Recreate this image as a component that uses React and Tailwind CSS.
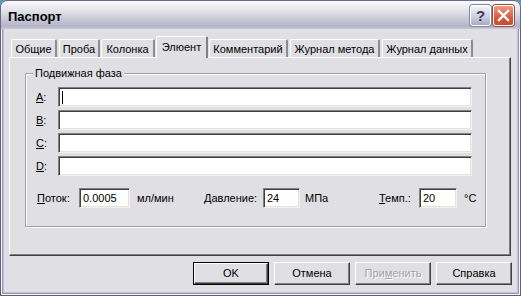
import React from 'react';

const tabs = [
  { label: 'Общие', w: 46, ml: 0 },
  { label: 'Проба', w: 41, ml: 2 },
  { label: 'Колонка', w: 54, ml: 1 },
  { label: 'Элюент', w: 52, ml: 1, active: true },
  { label: 'Комментарий', w: 79, ml: 1 },
  { label: 'Журнал метода', w: 90, ml: 2 },
  { label: 'Журнал данных', w: 91, ml: 2 },
];

const Field = ({ className = '', children }) => (
  <div
    className={`h-[20px] bg-white border border-t-[#808080] border-l-[#808080] border-b-[#f2f2ea] border-r-[#f2f2ea] shadow-[inset_1px_1px_0_#404040,inset_-1px_-1px_0_#e4e4dc] flex items-center pl-[3px] text-black ${className}`}
  >
    {children}
  </div>
);

const Button = ({ children, def, disabled }) => (
  <div
    className={`w-[76px] h-[23px] flex items-center justify-center ${
      def ? 'border border-black' : ''
    }`}
  >
    <div className="w-full h-full flex items-center justify-center bg-[#e0dfe3] border border-t-white border-l-white border-b-[#404040] border-r-[#404040] shadow-[inset_-1px_-1px_0_#808080]">
      <span
        className={
          disabled
            ? 'text-[#a0a0a0] [text-shadow:1px_1px_0_#ffffff]'
            : 'text-black'
        }
      >
        {children}
      </span>
    </div>
  </div>
);

const LetterLabel = ({ letter }) => (
  <div className="w-[22px] text-black">
    <span className="underline">{letter}</span>:
  </div>
);

export default function App() {
  return (
    <div
      className="w-[521px] h-[296px] bg-[#3aa6b8] text-[11px] leading-none text-black"
      style={{ fontFamily: '"Liberation Sans", Arial, sans-serif' }}
    >
      <div className="w-full h-full flex flex-col rounded-t-[7px] overflow-hidden bg-[#e0dfe3] shadow-[inset_0_0_0_1px_#5e5e80,inset_0_0_0_2px_#f4f4f8,inset_0_0_0_3px_#9a9ab4,inset_0_0_0_4px_#c0c0d0]">
        {/* title bar */}
        <div className="h-[29px] shrink-0 flex items-center justify-between pl-[7px] pr-[6px] bg-[linear-gradient(to_bottom,#fbfbfd_0%,#e2e2ea_35%,#c0c0d0_75%,#b4b4c8_90%,#c8c8d6_100%)] border-t border-x border-[#6a6a8a] rounded-t-[7px]">
          <span className="text-[13px] font-bold text-black mt-[2px]">Паспорт</span>
          <div className="flex gap-[2px] mt-[1px]">
            <div className="w-[21px] h-[21px] rounded-[3px] border border-white bg-[linear-gradient(to_bottom,#f4f4fa,#c4c4d6_70%,#a8a8c0)] shadow-[0_0_0_1px_#8686a0] flex items-center justify-center">
              <span className="text-[15px] font-bold text-[#3a3a5c]">?</span>
            </div>
            <div className="w-[21px] h-[21px] rounded-[3px] border border-white bg-[linear-gradient(to_bottom,#ee9e88,#d8593e_60%,#c84a30)] shadow-[0_0_0_1px_#9a4a3a] flex items-center justify-center">
              <svg width="13" height="13" viewBox="0 0 13 13">
                <path d="M2 2 L11 11 M11 2 L2 11" stroke="#ffffff" strokeWidth="2.4" strokeLinecap="square" />
              </svg>
            </div>
          </div>
        </div>

        {/* body */}
        <div className="flex-1 flex flex-col px-[4px] pb-[4px]">
          {/* tabs */}
          <div className="flex items-end h-[21px] mt-[7px] ml-[7px]">
            {tabs.map((t) =>
              t.active ? (
                <div
                  key={t.label}
                  style={{ width: t.w, marginLeft: t.ml }}
                  className="relative z-10 h-[22px] -mb-px bg-[#e0dfe3] border-t border-l border-white border-r-2 border-r-[#808080] rounded-t-[2px] flex justify-center pt-[5px]"
                >
                  {t.label}
                </div>
              ) : (
                <div
                  key={t.label}
                  style={{ width: t.w, marginLeft: t.ml }}
                  className="h-[18px] bg-[#e0dfe3] border-t border-l border-white border-r-2 border-r-[#8c8c98] rounded-t-[2px] flex justify-center pt-[4px]"
                >
                  {t.label}
                </div>
              )
            )}
          </div>

          {/* tab panel */}
          <div className="ml-[5px] mr-[6px] h-[199px] border-t border-l border-white border-r border-b border-r-[#404040] border-b-[#404040] shadow-[inset_-1px_-1px_0_#808080] pt-[15px] pl-[15px] pr-[24px]">
            <div className="relative h-[154px] border border-[#a0a0a0] shadow-[1px_1px_0_#ffffff,inset_1px_1px_0_#ffffff]">
              <div className="absolute left-[7px] -top-[6px] px-[2px] bg-[#e0dfe3]">
                Подвижная фаза
              </div>
              <div className="flex flex-col gap-[3px] pt-[13px] pl-[10px] pr-[13px]">
                {['A', 'B', 'C', 'D'].map((l) => (
                  <div key={l} className="flex items-center">
                    <LetterLabel letter={l} />
                    <Field className="flex-1">
                      {l === 'A' && <div className="w-px h-[13px] bg-black" />}
                    </Field>
                  </div>
                ))}
              </div>
              <div className="flex items-center mt-[12px] pl-[11px]">
                <span className="w-[42px]">
                  <span className="underline">П</span>оток:
                </span>
                <Field className="w-[51px]">0.0005</Field>
                <span className="ml-[7px] w-[67px]">мл/мин</span>
                <span className="w-[59px]">
                  <span className="underline">Д</span>авление:
                </span>
                <Field className="w-[37px]">24</Field>
                <span className="ml-[5px] w-[74px]">МПа</span>
                <span className="w-[40px]">
                  <span className="underline">Т</span>емп.:
                </span>
                <Field className="w-[38px]">20</Field>
                <span className="ml-[7px]">°C</span>
              </div>
            </div>
          </div>

          {/* buttons */}
          <div className="flex justify-end gap-[5px] mt-[6px] mr-[5px]">
            <Button def>OK</Button>
            <Button>Отмена</Button>
            <Button disabled>
              При<span className="underline">м</span>енить
            </Button>
            <Button>Справка</Button>
          </div>
        </div>
      </div>
    </div>
  );
}
